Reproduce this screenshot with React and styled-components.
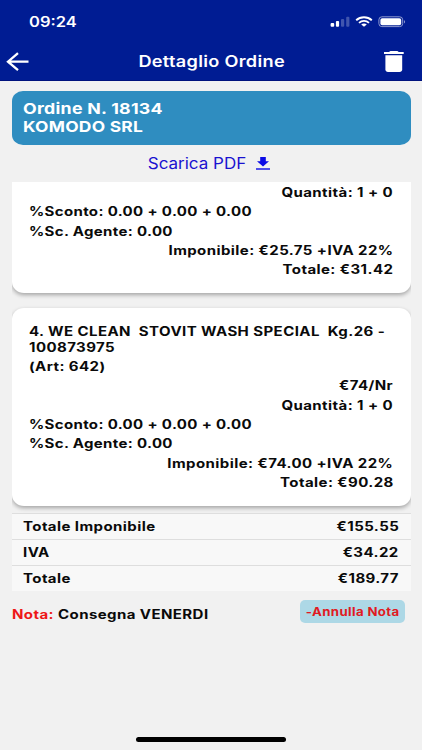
import React from "react";
import styled, { createGlobalStyle } from "styled-components";

const orderItems = [
  {
    id: 3,
    quantity: "1 + 0",
    discount: "0.00 + 0.00 + 0.00",
    agent: "0.00",
    taxable: "€25.75 +IVA 22%",
    total: "€31.42",
  },
  {
    id: 4,
    name: ["4. WE CLEAN  STOVIT WASH SPECIAL  Kg.26 -", "100873975"],
    article: "642",
    price: "€74/Nr",
    quantity: "1 + 0",
    discount: "0.00 + 0.00 + 0.00",
    agent: "0.00",
    taxable: "€74.00 +IVA 22%",
    total: "€90.28",
  },
];

const totals = [
  { label: "Totale Imponibile", value: "€155.55" },
  { label: "IVA", value: "€34.22" },
  { label: "Totale", value: "€189.77" },
];

const SignalIcon = () => (
  <svg width="20" height="12" viewBox="0 0 20 12" fill="#fff">
    <rect x="0.6" y="7" width="3.6" height="3.8" rx="1" />
    <rect x="5.9" y="5" width="3.2" height="5.8" rx="1" />
    <rect x="11" y="3" width="3.2" height="7.8" rx="1" opacity="0.25" />
    <rect x="16.2" y="0.8" width="3.2" height="10" rx="1" opacity="0.25" />
  </svg>
);

const WifiIcon = () => (
  <svg width="18" height="12" viewBox="0 0 18 12" fill="none" stroke="#fff">
    <path d="M1.2 4.2C5.5 0.3 12.5 0.3 16.8 4.2" strokeWidth="1.9" />
    <path d="M4 6.8C6.8 4.3 11.2 4.3 14 6.8" strokeWidth="1.8" />
    <path d="M6.2 8.5C7.8 7.1 10.2 7.1 11.8 8.5L9 10.8Z" fill="#fff" stroke="none" />
  </svg>
);

const BatteryIcon = () => (
  <svg width="28" height="12" viewBox="0 0 28 12">
    <rect x="0.9" y="0.8" width="23.8" height="9.8" rx="3" fill="none" stroke="#8c98cf" />
    <rect x="2.4" y="2.2" width="20.8" height="7" rx="1.8" fill="#fff" />
    <path d="M26 4.2C27.4 4.6 27.4 7 26 7.4Z" fill="#8c98cf" />
  </svg>
);

const BackIcon = () => (
  <svg width="23" height="20" viewBox="0 0 23 20" fill="none" stroke="#fff" strokeWidth="2.3">
    <path d="M22.5 9.7H2M12 1.1L2 9.7L12 18.1" />
  </svg>
);

const TrashIcon = () => (
  <svg width="20" height="22" viewBox="0 0 20 22" fill="#fff">
    <path d="M0 1H5L6.4 0H13.4L14.8 1H19.7V3H0Z" />
    <path d="M1.4 4.3H18.2V18.4C18.2 20 17.1 20.9 15.6 20.9H4C2.5 20.9 1.4 20 1.4 18.4Z" />
  </svg>
);

const DownloadIcon = () => (
  <svg width="14" height="14" viewBox="0 0 14 14" fill="#0b0be6">
    <path d="M4.2 0H9.8V4.3H13L7 9.5L1 4.3H4.2Z" />
    <rect x="0" y="11.3" width="14" height="1.4" />
  </svg>
);

const OrderItem = ({ item }) => {
  return (
    <Card>
      {item.name && (
        <ItemName>
          {item.name.map((line) => (
            <ItemText key={line}>{line}</ItemText>
          ))}
        </ItemName>
      )}
      {item.article && (
        <Line>
          <ItemText>(Art: {item.article})</ItemText>
        </Line>
      )}
      {item.price && (
        <Line $end>
          <ItemText $end>{item.price}</ItemText>
        </Line>
      )}
      <Line $end>
        <ItemText $end>Quantità: {item.quantity}</ItemText>
      </Line>
      <Line>
        <ItemText $tight>%Sconto: {item.discount}</ItemText>
      </Line>
      <Line>
        <ItemText $tight>%Sc. Agente: {item.agent}</ItemText>
      </Line>
      <Line $end>
        <ItemText $end>Imponibile: {item.taxable}</ItemText>
      </Line>
      <Line $end>
        <ItemText $end>Totale: {item.total}</ItemText>
      </Line>
    </Card>
  );
};

const App = () => {
  return (
    <Screen>
      <GlobalStyle />
      <Header>
        <StatusBar>
          <Clock>09:24</Clock>
          <StatusIcons>
            <SignalIcon />
            <WifiIcon />
            <BatteryIcon />
          </StatusIcons>
        </StatusBar>
        <NavBar>
          <BackButton aria-label="Indietro">
            <BackIcon />
          </BackButton>
          <Title>Dettaglio Ordine</Title>
          <DeleteButton aria-label="Elimina">
            <TrashIcon />
          </DeleteButton>
        </NavBar>
      </Header>

      <Content>
        <Banner>
          <BannerText $scale={1.185}>Ordine N. 18134</BannerText>
          <BannerText $scale={1.16}>KOMODO SRL</BannerText>
        </Banner>
        <Download>
          <DownloadText>Scarica PDF</DownloadText>
          <DownloadIcon />
        </Download>

        <Items>
          {orderItems.map((item) => (
            <OrderItem key={item.id} item={item} />
          ))}
        </Items>

        {totals.map((row) => (
          <TotalRow key={row.label}>
            <ItemText>{row.label}</ItemText>
            <ItemText $end>{row.value}</ItemText>
          </TotalRow>
        ))}

        <NoteRow>
          <Note>
            <NoteLabel>Nota:</NoteLabel> Consegna VENERDI
          </Note>
          <CancelNote>
            <CancelText>-Annulla Nota</CancelText>
          </CancelNote>
        </NoteRow>
      </Content>
      <HomeIndicator />
    </Screen>
  );
};

const GlobalStyle = createGlobalStyle`
  * {
    box-sizing: border-box;
  }

  body {
    margin: 0;
    font-family: Inter, "Liberation Sans", sans-serif;
  }
`;

const Screen = styled.div`
  display: flex;
  flex-direction: column;
  width: 422px;
  height: 750px;
  overflow: hidden;
  background-color: #f1f1f1;
  color: #0a0a0a;
`;

/* Wide lettering, grows away from the side the text is aligned to */
const Stretched = styled.span`
  display: block;
  width: max-content;
  white-space: pre;
  transform: scaleX(${({ $scale }) => $scale || 1.15});
  transform-origin: ${({ $end, $center }) =>
    $end ? "right" : $center ? "center" : "left"};
`;

const ItemText = styled(Stretched).attrs({ $scale: 1.2 })`
  margin-right: ${({ $end }) => ($end ? "-0.35px" : "0")};
  letter-spacing: ${({ $tight }) => ($tight ? "0.29px" : "0.35px")};
`;

const Header = styled.header`
  height: 81px;
  background-color: #001c93;
  border-bottom: 1px solid #00127d;
  color: white;
`;

const StatusBar = styled.div`
  display: flex;
  justify-content: space-between;
  align-items: center;
  height: 43px;
  padding: 0 16px 0 29px;
`;

const Clock = styled(Stretched).attrs({ $scale: 1.18 })`
  font-size: 14px;
  font-weight: 600;
`;

const StatusIcons = styled.div`
  display: flex;
  align-items: center;
  gap: 5px;
`;

const NavBar = styled.div`
  display: grid;
  grid-template-columns: 1fr auto 1fr;
  align-items: center;
  height: 37px;
  padding: 0 18px;
`;

const IconButton = styled.button`
  display: flex;
  padding: 0;
  border: none;
  background: none;
`;

const BackButton = styled(IconButton)`
  justify-self: start;
  margin-left: -12px;
`;

const DeleteButton = styled(IconButton)`
  justify-self: end;
`;

const Title = styled(Stretched).attrs({ $center: true, $scale: 1.17 })`
  padding-left: 1px;
  font-size: 15.5px;
  font-weight: 600;
  letter-spacing: 0.26px;
`;

const Content = styled.main`
  display: flex;
  flex-direction: column;
  flex: 1;
  padding: 10px 11px 0 12px;
`;

const Banner = styled.div`
  height: 54px;
  padding: 9px 11px;
  border-radius: 11px / 10px;
  background-color: #2f8dc0;
  color: white;
  font-size: 15px;
  font-weight: 700;
  line-height: 18px;
`;

const BannerText = styled(Stretched)`
  letter-spacing: 0.22px;
`;

const Download = styled.div`
  display: flex;
  justify-content: center;
  align-items: center;
  gap: 14.5px;
  height: 37px;
  color: #1a12d0;
`;

const DownloadText = styled(Stretched).attrs({ $center: true, $scale: 1.12 })`
  font-size: 15.2px;
`;

const Items = styled.div`
  display: flex;
  flex-direction: column;
  justify-content: flex-end;
  gap: 15px;
  height: 331px;
  padding-bottom: 7.5px;
  overflow: hidden;
`;

const Card = styled.div`
  flex-shrink: 0;
  padding: 16.2px 18px 12.8px 16.5px;
  border-radius: 12px / 11px;
  background-color: white;
  box-shadow: 0 2px 4px rgba(0, 0, 0, 0.32);
  font-size: 12.5px;
  font-weight: 700;
`;

const ItemName = styled.div`
  line-height: 16px;
  margin-bottom: 1px;
`;

const Line = styled.div`
  display: flex;
  justify-content: ${({ $end }) => ($end ? "flex-end" : "flex-start")};
  line-height: 19.4px;
`;

const TotalRow = styled.div`
  display: flex;
  justify-content: space-between;
  align-items: center;
  height: 26px;
  padding: 0 12.5px 0 11px;
  border-top: 1px solid #dedede;
  background-color: #f8f8f8;
  font-size: 12.5px;
  font-weight: 700;
`;

const NoteRow = styled.div`
  display: flex;
  justify-content: space-between;
  align-items: flex-start;
  padding: 9px 6px 0 0;
`;

const Note = styled(ItemText)`
  padding-top: 7px;
  font-size: 12.5px;
  font-weight: 700;
  line-height: 16px;
`;

const NoteLabel = styled.span`
  color: #ee1717;
`;

const CancelNote = styled.button`
  display: flex;
  justify-content: center;
  align-items: center;
  width: 105px;
  height: 23px;
  padding: 0;
  border: none;
  border-radius: 5px;
  background-color: #add8e6;
  color: #e01a22;
  font-family: inherit;
  font-size: 11.2px;
  font-weight: 700;
`;

const CancelText = styled(Stretched).attrs({ $center: true, $scale: 1.18 })`
  letter-spacing: 0.32px;
`;

const HomeIndicator = styled.div`
  align-self: center;
  width: 150px;
  height: 5px;
  margin-bottom: 8px;
  border-radius: 3px;
  background-color: black;
`;

export default App;
